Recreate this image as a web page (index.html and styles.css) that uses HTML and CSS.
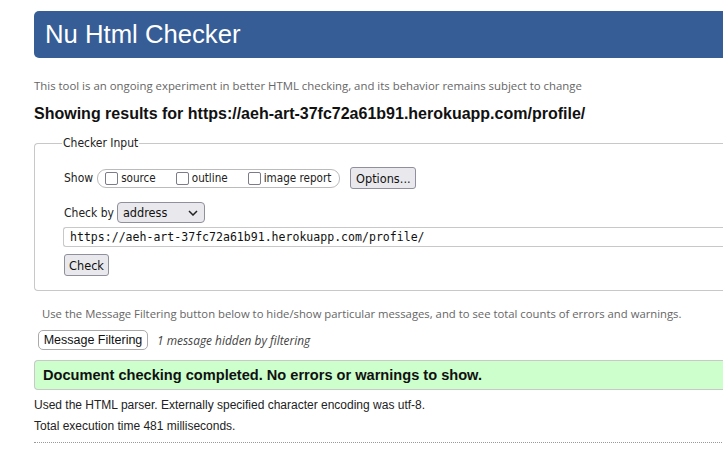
FILE: index.html
```html
<!DOCTYPE html>
<html lang="en">
<head>
<meta charset="utf-8">
<title>Nu Html Checker</title>
<link rel="stylesheet" href="styles.css">
</head>
<body>
<div class="page">
  <h1 class="title">Nu Html Checker</h1>
  <p class="intro">This tool is an ongoing experiment in better HTML checking, and its behavior remains subject to change</p>
  <h2 class="results">Showing results for https://aeh-art-37fc72a61b91.herokuapp.com/profile/</h2>
  <fieldset class="checker">
    <legend>Checker Input</legend>
    <div class="row show-row">
      <span class="label">Show</span>
      <span class="show-box">
        <label class="opt"><span class="cb"></span>source</label>
        <label class="opt"><span class="cb"></span>outline</label>
        <label class="opt"><span class="cb"></span>image report</label>
      </span>
      <span class="btn options">Options...</span>
    </div>
    <div class="row checkby-row">
      <span class="label">Check by</span>
      <span class="select">address
        <svg class="chev" width="10" height="6" viewBox="0 0 10 6"><path d="M1 1 L5 5 L9 1" fill="none" stroke="#222" stroke-width="1.5"/></svg>
      </span>
    </div>
    <div class="url">https://aeh-art-37fc72a61b91.herokuapp.com/profile/</div>
    <div class="row"><span class="btn check">Check</span></div>
  </fieldset>
  <p class="filter-note">Use the Message Filtering button below to hide/show particular messages, and to see total counts of errors and warnings.</p>
  <div class="filter-row">
    <span class="mf-btn">Message Filtering</span>
    <em class="hidden-note">1 message hidden by filtering</em>
  </div>
  <div class="success">Document checking completed. No errors or warnings to show.</div>
  <p class="details first">Used the HTML parser. Externally specified character encoding was utf-8.</p>
  <p class="details">Total execution time 481 milliseconds.</p>
  <hr class="dotted">
</div>
</body>
</html>
```
FILE: styles.css
```css
html, body {
  margin: 0;
  padding: 0;
  overflow: hidden;
  background: #fff;
}
.page {
  width: 760px;
  padding: 11px 0 0 34px;
  font-family: "Liberation Sans", Arial, sans-serif;
  color: #000;
}
.title {
  margin: 0;
  height: 47px;
  box-sizing: border-box;
  background: #365d96;
  color: #fff;
  font-weight: normal;
  font-size: 25.7px;
  line-height: 47px;
  padding-left: 11px;
  border-radius: 5px 0 0 5px;
}
.intro {
  margin: 20px 0 0;
  font-family: "Open Sans", sans-serif;
  font-size: 11.4px;
  line-height: 16px;
  color: #666;
}
.results {
  margin: 10px 0 0;
  font-size: 16px;
  line-height: 20px;
  font-weight: bold;
  color: #111;
}
.checker {
  margin: 12px 0 0;
  border: 1px solid #c8c8c8;
  border-right: none;
  border-radius: 4px 0 0 4px;
  padding: 17px 0 14px 29px;
  font-family: "DejaVu Sans Condensed", "DejaVu Sans", sans-serif;
  font-size: 12px;
}
.checker legend {
  margin-left: -2px;
  padding: 0 1px;
  font-size: 12px;
  color: #222;
}
.row {
  display: flex;
  align-items: center;
}
.label {
  color: #222;
  margin-right: 3px;
}
.show-row {
  height: 22px;
}
.show-box {
  display: flex;
  align-items: center;
  height: 19px;
  box-sizing: border-box;
  border: 1px solid #bbb;
  border-radius: 9px;
  padding: 0 8px 0 7px;
  font-size: 11.6px;
  margin-left: 1px;
}
.opt {
  display: flex;
  align-items: center;
  color: #222;
}
.opt + .opt {
  margin-left: 20px;
}
.cb {
  display: inline-block;
  width: 11px;
  height: 11px;
  border: 1px solid #7b7b8a;
  border-radius: 2px;
  margin-right: 3px;
}
.btn {
  display: inline-flex;
  align-items: center;
  justify-content: center;
  box-sizing: border-box;
  background: #e9e9ed;
  border: 1px solid #8f8f9d;
  border-radius: 3px;
  color: #111;
  font-size: 12.6px;
}
.options {
  margin-left: 10px;
  width: 66px;
  height: 22px;
}
.checkby-row {
  margin-top: 13px;
  height: 21px;
}
.select {
  display: inline-flex;
  align-items: center;
  box-sizing: border-box;
  width: 88px;
  height: 21px;
  background: #e9e9ed;
  border: 1px solid #8f8f9d;
  border-radius: 4px;
  padding-left: 5px;
  font-size: 12.6px;
  color: #111;
  position: relative;
}
.chev {
  position: absolute;
  right: 6px;
  top: 7px;
}
.url {
  margin: 4px 0 0 -1px;
  height: 20px;
  box-sizing: border-box;
  border: 1px solid #c8c8c8;
  border-right: none;
  border-radius: 3px 0 0 3px;
  padding-left: 6px;
  font-family: "DejaVu Sans Mono", monospace;
  font-size: 11.55px;
  line-height: 18px;
  color: #111;
}
.check {
  margin-top: 7px;
  width: 45px;
  height: 22px;
}
.filter-note {
  margin: 15px 0 0 8px;
  font-family: "Open Sans", sans-serif;
  font-size: 11.3px;
  line-height: 16px;
  color: #666;
}
.filter-row {
  display: flex;
  align-items: center;
  margin: 8px 0 0 4px;
}
.mf-btn {
  display: inline-block;
  box-sizing: border-box;
  height: 20px;
  width: 110px;
  border: 1px solid #aaa;
  border-radius: 5px;
  font-size: 12.5px;
  line-height: 18px;
  text-align: center;
  color: #111;
}
.hidden-note {
  margin-left: 9px;
  font-family: "Open Sans", sans-serif;
  font-size: 11.9px;
  color: #444;
}
.success {
  margin-top: 10px;
  height: 30px;
  box-sizing: border-box;
  background: #ccffcc;
  border: 1px solid #c8c8c8;
  border-right: none;
  border-radius: 4px 0 0 4px;
  padding-left: 8px;
  font-weight: bold;
  font-size: 14.6px;
  line-height: 28px;
  color: #111;
}
.details {
  margin: 0;
  font-size: 12px;
  line-height: 21px;
  color: #222;
}
.details.first {
  margin-top: 5px;
}
.dotted {
  margin: 5px 0 0;
  border: none;
  border-top: 1px dotted #999;
  height: 0;
}
```
